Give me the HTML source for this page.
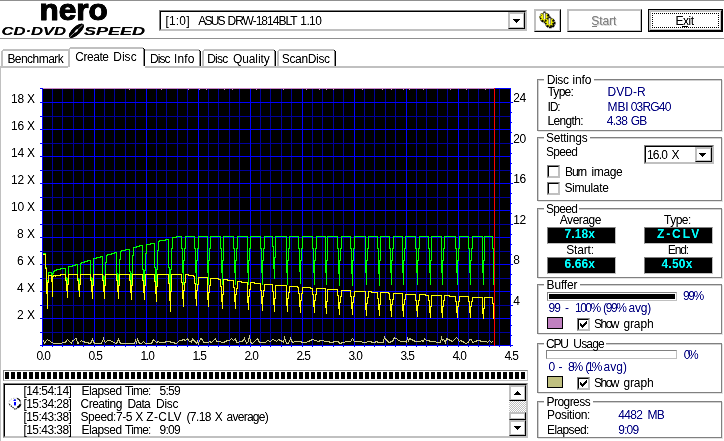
<!DOCTYPE html><html><head><meta charset="utf-8"><title>Nero CD-DVD Speed</title><style>
html,body{margin:0;padding:0;background:#fff;}
body{width:724px;height:441px;overflow:hidden;position:relative;font-family:"Liberation Sans",sans-serif;font-size:12px;color:#000;}
.a{position:absolute;}
.t{filter:url(#al);position:absolute;white-space:pre;line-height:14px;height:14px;}
.grp{position:absolute;border:1px solid #808080;box-sizing:border-box;box-shadow:inset 1px 1px 0 #d0d0d0,1px 1px 0 #e4e4e4;}
.btn{position:absolute;box-sizing:border-box;background:#fff;border-style:solid;border-width:1px;border-color:#c0c0c0 #000 #000 #c0c0c0;}
.btn:after{content:"";position:absolute;left:0;top:0;right:0;bottom:0;border-style:solid;border-width:1px;border-color:#c0c0c0;}
.sunk{position:absolute;box-sizing:border-box;background:#fff;border-style:solid;border-width:1px;border-color:#808080 #c0c0c0 #c0c0c0 #808080;}
.sunk:after{content:"";position:absolute;left:0;top:0;right:0;bottom:0;border-style:solid;border-width:1px;border-color:#000 #c0c0c0 #c0c0c0 #000;pointer-events:none;}
.lcd{position:absolute;box-sizing:border-box;background:#000;border:1px solid #808080;border-right-color:#c0c0c0;border-bottom-color:#c0c0c0;}
.chk{position:absolute;box-sizing:border-box;width:13px;height:13px;background:#fff;border-style:solid;border-width:1px;border-color:#808080 #c0c0c0 #c0c0c0 #808080;}
.chk:after{content:"";position:absolute;left:0;top:0;right:0;bottom:0;border-style:solid;border-width:1px;border-color:#000 #c0c0c0 #c0c0c0 #000;}
</style></head><body>
<svg width="0" height="0" style="position:absolute"><filter id="al" x="-10%" y="-10%" width="120%" height="120%" color-interpolation-filters="sRGB"><feComponentTransfer><feFuncA type="table" tableValues="0 0.12 0.55 0.9 1"/></feComponentTransfer></filter></svg>
<div class="a" style="left:0;top:0;width:724px;height:1px;background:#909090"></div>
<div class="a" style="left:0;top:38px;width:724px;height:1px;background:#909090"></div>
<svg class="a" style="left:0;top:0;filter:url(#al)" width="150" height="38" viewBox="0 0 150 38">
<text x="39.6" y="19.6" font-family="Liberation Sans, sans-serif" font-weight="bold" font-size="29" textLength="68.2" lengthAdjust="spacingAndGlyphs" stroke="#000" stroke-width="1.1" fill="#000">nero</text>
<g font-family="Liberation Sans, sans-serif" font-weight="bold" font-style="italic" font-size="11.5" fill="#000" stroke="#000" stroke-width="0.15">
<text x="1.5" y="35" textLength="64.5" lengthAdjust="spacingAndGlyphs">CD·DVD</text>
<text x="84" y="35" textLength="61" lengthAdjust="spacingAndGlyphs">SPEED</text>
</g>
<g transform="translate(76.4,30.8) rotate(-43)"><ellipse cx="0" cy="0" rx="9.6" ry="4.1" fill="#000"/><path d="M-8.4 0H8.4" stroke="#fff" stroke-width="0.6" fill="none"/><ellipse cx="0" cy="0" rx="2.2" ry="0.9" fill="#fff"/></g>
</svg>
<div class="sunk" style="left:159px;top:10px;width:368px;height:21px"></div>
<div class="btn" style="left:508px;top:12px;width:17px;height:17px"></div>
<svg class="a" style="left:513px;top:19px" width="8" height="5" shape-rendering="crispEdges"><path d="M0 0h7v1h-1v1h-1v1h-1v1h-1v-1h-1v-1h-1v-1h-1z" fill="#000"/></svg>
<div class="btn" style="left:534px;top:9px;width:27px;height:23px"></div>
<svg class="a" style="left:0;top:0" width="724" height="40" viewBox="0 0 724 40"><path d="M548.83 16.19L548.83 17.81L547.41 17.77L547.01 18.72L548.05 19.70L546.90 20.85L545.92 19.81L544.97 20.21L545.01 21.63L543.39 21.63L543.43 20.21L542.48 19.81L541.50 20.85L540.35 19.70L541.39 18.72L540.99 17.77L539.57 17.81L539.57 16.19L540.99 16.23L541.39 15.28L540.35 14.30L541.50 13.15L542.48 14.19L543.43 13.79L543.39 12.37L545.01 12.37L544.97 13.79L545.92 14.19L546.90 13.15L548.05 14.30L547.01 15.28L547.41 16.23z" transform="translate(0.9,0.9)" fill="#000" stroke="#000" stroke-width="1.2"/><path d="M548.83 16.19L548.83 17.81L547.41 17.77L547.01 18.72L548.05 19.70L546.90 20.85L545.92 19.81L544.97 20.21L545.01 21.63L543.39 21.63L543.43 20.21L542.48 19.81L541.50 20.85L540.35 19.70L541.39 18.72L540.99 17.77L539.57 17.81L539.57 16.19L540.99 16.23L541.39 15.28L540.35 14.30L541.50 13.15L542.48 14.19L543.43 13.79L543.39 12.37L545.01 12.37L544.97 13.79L545.92 14.19L546.90 13.15L548.05 14.30L547.01 15.28L547.41 16.23z" fill="#f4f400" stroke="#202000" stroke-width="0.5"/><path d="M554.03 21.39L554.03 23.01L552.61 22.97L552.21 23.92L553.25 24.90L552.10 26.05L551.12 25.01L550.17 25.41L550.21 26.83L548.59 26.83L548.63 25.41L547.68 25.01L546.70 26.05L545.55 24.90L546.59 23.92L546.19 22.97L544.77 23.01L544.77 21.39L546.19 21.43L546.59 20.48L545.55 19.50L546.70 18.35L547.68 19.39L548.63 18.99L548.59 17.57L550.21 17.57L550.17 18.99L551.12 19.39L552.10 18.35L553.25 19.50L552.21 20.48L552.61 21.43z" transform="translate(0.9,0.9)" fill="#000" stroke="#000" stroke-width="1.2"/><path d="M554.03 21.39L554.03 23.01L552.61 22.97L552.21 23.92L553.25 24.90L552.10 26.05L551.12 25.01L550.17 25.41L550.21 26.83L548.59 26.83L548.63 25.41L547.68 25.01L546.70 26.05L545.55 24.90L546.59 23.92L546.19 22.97L544.77 23.01L544.77 21.39L546.19 21.43L546.59 20.48L545.55 19.50L546.70 18.35L547.68 19.39L548.63 18.99L548.59 17.57L550.21 17.57L550.17 18.99L551.12 19.39L552.10 18.35L553.25 19.50L552.21 20.48L552.61 21.43z" fill="#f4f400" stroke="#202000" stroke-width="0.5"/><rect x="543.3" y="12.5" width="2.4" height="6.5" fill="#707070"/><rect x="544.0" y="13.0" width="1" height="6" fill="#f0f0f0"/><rect x="543.5" y="11.5" width="2" height="1" fill="#000"/><rect x="548.4" y="17.7" width="2.4" height="6.5" fill="#707070"/><rect x="549.1" y="18.2" width="1" height="6" fill="#f0f0f0"/><rect x="548.6" y="16.7" width="2" height="1" fill="#000"/></svg>
<div class="btn" style="left:567px;top:9px;width:75px;height:23px"></div>
<div class="a" style="left:592px;top:26px;width:5px;height:1px;background:#808080"></div>
<div class="a" style="left:648px;top:9px;width:75px;height:23px;box-sizing:border-box;border:1px solid #000"></div>
<div class="btn" style="left:649px;top:10px;width:73px;height:21px"></div>
<div class="a" style="left:652px;top:13px;width:67px;height:15px;box-sizing:border-box;border:1px dotted #000"></div>
<div class="a" style="left:682px;top:26px;width:6px;height:1px;background:#000"></div>
<svg class="a" style="left:0;top:0" width="724" height="441" shape-rendering="crispEdges"><path d="M0 66h68v2h-68zM145 66h579v2h-579zM0 66h1v375h-1zM3 49h66v2h-66zM1 51h2v15h-2zM2 50h1v1h-1zM145 49h54v2h-54zM204 49h70v2h-70zM202 51h2v15h-2zM203 50h1v1h-1zM279 49h55v2h-55zM277 51h2v15h-2zM278 50h1v1h-1zM70 47h73v2h-73zM68 49h2v17h-2zM69 48h1v1h-1zM68 66h2v1h-2z" fill="#c0c0c0"/><path d="M199 51h1v15h-1zM274 51h1v15h-1zM334 51h1v15h-1zM143 49h1v17h-1z" fill="#909090"/><path d="M200 51h1v15h-1zM199 50h1v1h-1zM275 51h1v15h-1zM274 50h1v1h-1zM335 51h1v15h-1zM334 50h1v1h-1zM144 49h1v17h-1zM143 48h1v1h-1z" fill="#000"/></svg>
<div class="grp" style="left:537px;top:79px;width:185px;height:52px"></div>
<div class="a" style="left:544px;top:77px;width:50px;height:5px;background:#fff"></div>
<div class="grp" style="left:537px;top:137px;width:185px;height:64px"></div>
<div class="a" style="left:544px;top:135px;width:46px;height:5px;background:#fff"></div>
<div class="sunk" style="left:644px;top:145px;width:70px;height:19px"></div>
<div class="btn" style="left:695px;top:147px;width:17px;height:15px"></div>
<svg class="a" style="left:699px;top:153px" width="8" height="5" shape-rendering="crispEdges"><path d="M0 0h7v1h-1v1h-1v1h-1v1h-1v-1h-1v-1h-1v-1h-1z" fill="#000"/></svg>
<div class="chk" style="left:547px;top:165px"></div>
<div class="chk" style="left:547px;top:182px"></div>
<div class="grp" style="left:537px;top:208px;width:185px;height:70px"></div>
<div class="a" style="left:544px;top:206px;width:35px;height:5px;background:#fff"></div>
<div class="lcd" style="left:547px;top:227px;width:69px;height:17px"></div>
<div class="lcd" style="left:644px;top:227px;width:69px;height:17px"></div>
<div class="lcd" style="left:547px;top:257px;width:69px;height:17px"></div>
<div class="lcd" style="left:644px;top:257px;width:69px;height:17px"></div>
<div class="grp" style="left:537px;top:284px;width:185px;height:50px"></div>
<div class="a" style="left:544px;top:282px;width:36px;height:5px;background:#fff"></div>
<div class="a" style="left:547px;top:292px;width:130px;height:9px;box-sizing:border-box;border:1px solid #808080;border-right-color:#c0c0c0;border-bottom-color:#c0c0c0;background:#fff"><div style="position:absolute;left:1px;top:1px;width:126px;height:5px;background:#000"></div></div>
<div class="a" style="left:547px;top:317px;width:16px;height:12px;box-sizing:border-box;border:1px solid #000;background:#c080c0"></div>
<div class="chk" style="left:577px;top:318px"></div>
<svg class="a" style="left:580px;top:321px" width="7" height="7" shape-rendering="crispEdges"><path d="M0 2h1v1h1v1h1v-1h1v-1h1v-1h1v-1h1v3h-1v1h-1v1h-1v1h-1v1h-1v-1h-1v-1h-1z" fill="#000"/></svg>
<div class="grp" style="left:537px;top:343px;width:185px;height:50px"></div>
<div class="a" style="left:544px;top:341px;width:62px;height:5px;background:#fff"></div>
<div class="a" style="left:546px;top:350px;width:131px;height:9px;box-sizing:border-box;border:1px solid #808080;border-right-color:#c0c0c0;border-bottom-color:#c0c0c0;background:#fff"></div>
<div class="a" style="left:547px;top:376px;width:16px;height:12px;box-sizing:border-box;border:1px solid #000;background:#c0c080"></div>
<div class="chk" style="left:577px;top:377px"></div>
<svg class="a" style="left:580px;top:380px" width="7" height="7" shape-rendering="crispEdges"><path d="M0 2h1v1h1v1h1v-1h1v-1h1v-1h1v-1h1v3h-1v1h-1v1h-1v1h-1v1h-1v-1h-1v-1h-1z" fill="#000"/></svg>
<div class="grp" style="left:537px;top:401px;width:185px;height:37px"></div>
<div class="a" style="left:544px;top:399px;width:49px;height:5px;background:#fff"></div>
<div class="a" style="left:3px;top:370px;width:525px;height:11px;box-sizing:border-box;border:1px solid #808080;border-right-color:#c0c0c0;border-bottom-color:#c0c0c0"></div>
<svg class="a" style="left:0;top:0" width="724" height="441" shape-rendering="crispEdges"><path d="M5 372h4v7h-4zM11 372h4v7h-4zM17 372h4v7h-4zM23 372h4v7h-4zM29 372h4v7h-4zM35 372h4v7h-4zM41 372h4v7h-4zM47 372h4v7h-4zM53 372h4v7h-4zM59 372h4v7h-4zM65 372h4v7h-4zM71 372h4v7h-4zM77 372h4v7h-4zM83 372h4v7h-4zM89 372h4v7h-4zM95 372h4v7h-4zM101 372h4v7h-4zM107 372h4v7h-4zM113 372h4v7h-4zM119 372h4v7h-4zM125 372h4v7h-4zM131 372h4v7h-4zM137 372h4v7h-4zM143 372h4v7h-4zM149 372h4v7h-4zM155 372h4v7h-4zM161 372h4v7h-4zM167 372h4v7h-4zM173 372h4v7h-4zM179 372h4v7h-4zM185 372h4v7h-4zM191 372h4v7h-4zM197 372h4v7h-4zM203 372h4v7h-4zM209 372h4v7h-4zM215 372h4v7h-4zM221 372h4v7h-4zM227 372h4v7h-4zM233 372h4v7h-4zM239 372h4v7h-4zM245 372h4v7h-4zM251 372h4v7h-4zM257 372h4v7h-4zM263 372h4v7h-4zM269 372h4v7h-4zM275 372h4v7h-4zM281 372h4v7h-4zM287 372h4v7h-4zM293 372h4v7h-4zM299 372h4v7h-4zM305 372h4v7h-4zM311 372h4v7h-4zM317 372h4v7h-4zM323 372h4v7h-4zM329 372h4v7h-4zM335 372h4v7h-4zM341 372h4v7h-4zM347 372h4v7h-4zM353 372h4v7h-4zM359 372h4v7h-4zM365 372h4v7h-4zM371 372h4v7h-4zM377 372h4v7h-4zM383 372h4v7h-4zM389 372h4v7h-4zM395 372h4v7h-4zM401 372h4v7h-4zM407 372h4v7h-4zM413 372h4v7h-4zM419 372h4v7h-4zM425 372h4v7h-4zM431 372h4v7h-4zM437 372h4v7h-4zM443 372h4v7h-4zM449 372h4v7h-4zM455 372h4v7h-4zM461 372h4v7h-4zM467 372h4v7h-4zM473 372h4v7h-4zM479 372h4v7h-4zM485 372h4v7h-4zM491 372h4v7h-4zM497 372h4v7h-4zM503 372h4v7h-4zM509 372h4v7h-4zM515 372h4v7h-4zM521 372h4v7h-4z" fill="#000"/></svg>
<div class="sunk" style="left:3px;top:383px;width:525px;height:55px"></div>
<div class="a" style="left:509px;top:385px;width:17px;height:51px;background:repeating-conic-gradient(#c0c0c0 0% 25%, #fff 0% 50%) 0 0/2px 2px"></div>
<div class="btn" style="left:509px;top:385px;width:17px;height:16px"></div>
<div class="btn" style="left:509px;top:412px;width:17px;height:8px"></div>
<div class="btn" style="left:509px;top:420px;width:17px;height:16px"></div>
<svg class="a" style="left:514px;top:391px" width="8" height="5" shape-rendering="crispEdges"><path d="M3 0h1v1h1v1h1v1h1v1h-7v-1h1v-1h1v-1h1z" fill="#000"/></svg>
<svg class="a" style="left:514px;top:426px" width="8" height="5" shape-rendering="crispEdges"><path d="M0 0h7v1h-1v1h-1v1h-1v1h-1v-1h-1v-1h-1v-1h-1z" fill="#000"/></svg>
<svg class="a" style="left:0;top:390px" width="30" height="25" viewBox="0 390 30 25">
<path d="M17.2 398.4C18.8 399 20 400.2 20.4 401.5" fill="none" stroke="#000" stroke-width="1.2"/><path d="M20.6 401.5V404.5" fill="none" stroke="#909090" stroke-width="1"/><path d="M20.5 404.3C20 406 18.8 407 17.3 407.7" fill="none" stroke="#000" stroke-width="2"/>
<path d="M9.2 404.3L15.5 409.7L17.2 407.4" fill="none" stroke="#000" stroke-width="1.1" stroke-dasharray="1.3 0.9"/>
<path d="M9.2 404C8.2 400.5 11.5 397.8 16.5 398.2" fill="none" stroke="#a0a0a0" stroke-width="1" stroke-dasharray="1 1.6"/>
<path d="M13.2 401L14.6 399h0.8L16 401z" fill="#0000ff"/><rect x="14" y="402" width="2" height="3.4" fill="#0000ff"/>
</svg>
<svg class="chart" width="724" height="441" viewBox="0 0 724 441" shape-rendering="crispEdges" style="position:absolute;left:0;top:0">
<rect x="43" y="89" width="467" height="256" fill="#000"/>
<path d="M43 332h467v1h-467zM43 305h467v1h-467zM43 278h467v1h-467zM43 251h467v1h-467zM43 224h467v1h-467zM43 197h467v1h-467zM43 170h467v1h-467zM43 143h467v1h-467zM43 116h467v1h-467zM52 89h1v256h-1zM62 89h1v256h-1zM73 89h1v256h-1zM83 89h1v256h-1zM104 89h1v256h-1zM114 89h1v256h-1zM125 89h1v256h-1zM135 89h1v256h-1zM156 89h1v256h-1zM166 89h1v256h-1zM177 89h1v256h-1zM187 89h1v256h-1zM208 89h1v256h-1zM218 89h1v256h-1zM229 89h1v256h-1zM239 89h1v256h-1zM260 89h1v256h-1zM270 89h1v256h-1zM281 89h1v256h-1zM291 89h1v256h-1zM312 89h1v256h-1zM322 89h1v256h-1zM333 89h1v256h-1zM343 89h1v256h-1zM364 89h1v256h-1zM374 89h1v256h-1zM385 89h1v256h-1zM395 89h1v256h-1zM416 89h1v256h-1zM426 89h1v256h-1zM437 89h1v256h-1zM447 89h1v256h-1zM468 89h1v256h-1zM478 89h1v256h-1zM489 89h1v256h-1zM499 89h1v256h-1z" fill="#00009c"/>
<path d="M43 318h467v1h-467zM43 291h467v1h-467zM43 264h467v1h-467zM43 237h467v1h-467zM43 210h467v1h-467zM43 183h467v1h-467zM43 156h467v1h-467zM43 129h467v1h-467zM43 102h467v1h-467zM94 89h1v256h-1zM146 89h1v256h-1zM198 89h1v256h-1zM250 89h1v256h-1zM302 89h1v256h-1zM354 89h1v256h-1zM406 89h1v256h-1zM458 89h1v256h-1z" fill="#0000ff"/>
<path d="M42 88h469v1h-469zM42 345h469v1h-469zM42 88h1v258h-1zM510 88h1v258h-1zM40 345h2v1h-2zM40 332h2v1h-2zM40 318h2v1h-2zM40 305h2v1h-2zM40 291h2v1h-2zM40 278h2v1h-2zM40 264h2v1h-2zM40 251h2v1h-2zM40 237h2v1h-2zM40 224h2v1h-2zM40 210h2v1h-2zM40 197h2v1h-2zM40 183h2v1h-2zM40 170h2v1h-2zM40 156h2v1h-2zM40 143h2v1h-2zM40 129h2v1h-2zM40 116h2v1h-2zM40 102h2v1h-2zM40 88h2v1h-2zM511 345h2v1h-2zM511 335h1v1h-1zM511 325h1v1h-1zM511 315h1v1h-1zM511 305h2v1h-2zM511 294h1v1h-1zM511 284h1v1h-1zM511 274h1v1h-1zM511 264h2v1h-2zM511 254h1v1h-1zM511 244h1v1h-1zM511 234h1v1h-1zM511 224h2v1h-2zM511 213h1v1h-1zM511 203h1v1h-1zM511 193h1v1h-1zM511 183h2v1h-2zM511 173h1v1h-1zM511 163h1v1h-1zM511 153h1v1h-1zM511 143h2v1h-2zM511 132h1v1h-1zM511 122h1v1h-1zM511 112h1v1h-1zM511 102h2v1h-2zM42 346h1v1h-1zM52 346h1v1h-1zM62 346h1v1h-1zM73 346h1v1h-1zM83 346h1v1h-1zM94 346h1v1h-1zM104 346h1v1h-1zM114 346h1v1h-1zM125 346h1v1h-1zM135 346h1v1h-1zM146 346h1v1h-1zM156 346h1v1h-1zM166 346h1v1h-1zM177 346h1v1h-1zM187 346h1v1h-1zM198 346h1v1h-1zM208 346h1v1h-1zM218 346h1v1h-1zM229 346h1v1h-1zM239 346h1v1h-1zM250 346h1v1h-1zM260 346h1v1h-1zM270 346h1v1h-1zM281 346h1v1h-1zM291 346h1v1h-1zM302 346h1v1h-1zM312 346h1v1h-1zM322 346h1v1h-1zM333 346h1v1h-1zM343 346h1v1h-1zM354 346h1v1h-1zM364 346h1v1h-1zM374 346h1v1h-1zM385 346h1v1h-1zM395 346h1v1h-1zM406 346h1v1h-1zM416 346h1v1h-1zM426 346h1v1h-1zM437 346h1v1h-1zM447 346h1v1h-1zM458 346h1v1h-1zM468 346h1v1h-1zM478 346h1v1h-1zM489 346h1v1h-1zM499 346h1v1h-1zM510 346h1v1h-1z" fill="#0000ff"/>
<rect x="43" y="88" width="452" height="1" fill="#c888c8"/>
<path d="M129 89h1v1h-1zM161 89h1v1h-1zM188 89h1v1h-1zM199 89h1v1h-1zM206 89h1v1h-1zM224 89h1v1h-1zM232 89h1v1h-1zM256 89h1v1h-1zM283 89h1v1h-1zM306 89h1v1h-1zM319 89h1v1h-1zM326 89h1v1h-1zM333 89h1v1h-1zM362 89h1v1h-1zM382 89h1v1h-1zM391 89h1v1h-1zM403 89h1v1h-1zM409 89h1v1h-1zM423 89h1v1h-1zM450 89h1v1h-1zM466 89h1v1h-1zM485 89h1v1h-1z" fill="#c888c8"/>
<path d="M43 253h1v1h-1zM44 253h1v1h-1zM45 253h1v15h-1zM46 267h1v26h-1zM47 280h1v21h-1zM48 272h1v9h-1zM49 272h1v1h-1zM50 272h1v1h-1zM51 272h1v8h-1zM52 273h1v15h-1zM53 271h1v3h-1zM54 270h1v2h-1zM55 270h1v1h-1zM56 269h1v2h-1zM57 269h1v1h-1zM58 269h1v1h-1zM59 269h1v1h-1zM60 268h1v2h-1zM61 268h1v1h-1zM62 268h1v1h-1zM63 268h1v1h-1zM64 268h1v1h-1zM65 268h1v10h-1zM66 277h1v9h-1zM67 278h1v8h-1zM68 266h1v13h-1zM69 266h1v1h-1zM70 266h1v1h-1zM71 266h1v1h-1zM72 265h1v2h-1zM73 265h1v1h-1zM74 265h1v1h-1zM75 264h1v2h-1zM76 264h1v1h-1zM77 264h1v15h-1zM78 278h1v13h-1zM79 279h1v12h-1zM80 263h1v17h-1zM81 262h1v2h-1zM82 262h1v1h-1zM83 262h1v1h-1zM84 261h1v2h-1zM85 261h1v1h-1zM86 261h1v1h-1zM87 260h1v2h-1zM88 260h1v1h-1zM89 260h1v1h-1zM90 260h1v18h-1zM91 277h1v15h-1zM92 278h1v14h-1zM93 258h1v21h-1zM94 258h1v1h-1zM95 258h1v1h-1zM96 257h1v2h-1zM97 257h1v1h-1zM98 257h1v1h-1zM99 257h1v1h-1zM100 256h1v2h-1zM101 256h1v1h-1zM102 256h1v20h-1zM103 275h1v16h-1zM104 276h1v15h-1zM105 262h1v15h-1zM106 255h1v8h-1zM107 254h1v2h-1zM108 254h1v1h-1zM109 254h1v1h-1zM110 254h1v1h-1zM111 253h1v2h-1zM112 253h1v1h-1zM113 253h1v1h-1zM114 252h1v2h-1zM115 252h1v1h-1zM116 252h1v22h-1zM117 273h1v18h-1zM118 274h1v17h-1zM119 259h1v16h-1zM120 251h1v9h-1zM121 250h1v2h-1zM122 250h1v1h-1zM123 250h1v1h-1zM124 250h1v1h-1zM125 249h1v2h-1zM126 249h1v1h-1zM127 249h1v1h-1zM128 249h1v1h-1zM129 249h1v23h-1zM130 271h1v19h-1zM131 273h1v17h-1zM132 255h1v19h-1zM133 247h1v9h-1zM134 247h1v1h-1zM135 247h1v1h-1zM136 246h1v2h-1zM137 246h1v1h-1zM138 246h1v1h-1zM139 245h1v2h-1zM140 245h1v1h-1zM141 245h1v1h-1zM142 245h1v25h-1zM143 269h1v20h-1zM144 270h1v19h-1zM145 253h1v18h-1zM146 244h1v10h-1zM147 244h1v1h-1zM148 244h1v1h-1zM149 244h1v1h-1zM150 243h1v2h-1zM151 243h1v1h-1zM152 243h1v1h-1zM153 243h1v1h-1zM154 243h1v25h-1zM155 267h1v21h-1zM156 269h1v19h-1zM157 250h1v20h-1zM158 241h1v10h-1zM159 240h1v2h-1zM160 240h1v1h-1zM161 240h1v1h-1zM162 240h1v1h-1zM163 240h1v1h-1zM164 240h1v1h-1zM165 239h1v2h-1zM166 239h1v1h-1zM167 239h1v1h-1zM168 239h1v29h-1zM169 267h1v24h-1zM170 269h1v22h-1zM171 248h1v22h-1zM172 237h1v12h-1zM173 237h1v1h-1zM174 237h1v1h-1zM175 237h1v1h-1zM176 236h1v2h-1zM177 236h1v1h-1zM178 236h1v1h-1zM179 236h1v1h-1zM180 236h1v1h-1zM181 236h1v13h-1zM182 248h1v25h-1zM183 260h1v25h-1zM184 248h1v13h-1zM185 236h1v13h-1zM186 236h1v1h-1zM187 236h1v1h-1zM188 236h1v1h-1zM189 236h1v1h-1zM190 236h1v1h-1zM191 236h1v1h-1zM192 236h1v1h-1zM193 236h1v1h-1zM194 236h1v13h-1zM195 248h1v25h-1zM196 260h1v25h-1zM197 248h1v13h-1zM198 236h1v13h-1zM199 236h1v1h-1zM200 236h1v1h-1zM201 236h1v1h-1zM202 236h1v1h-1zM203 236h1v1h-1zM204 236h1v1h-1zM205 236h1v1h-1zM206 236h1v1h-1zM207 236h1v37h-1zM208 260h1v25h-1zM209 248h1v13h-1zM210 236h1v13h-1zM211 236h1v1h-1zM212 236h1v1h-1zM213 236h1v1h-1zM214 236h1v1h-1zM215 236h1v1h-1zM216 236h1v1h-1zM217 236h1v1h-1zM218 236h1v1h-1zM219 236h1v1h-1zM220 236h1v13h-1zM221 248h1v25h-1zM222 260h1v25h-1zM223 236h1v25h-1zM224 236h1v1h-1zM225 236h1v1h-1zM226 236h1v1h-1zM227 236h1v1h-1zM228 236h1v1h-1zM229 236h1v1h-1zM230 236h1v1h-1zM231 236h1v1h-1zM232 236h1v1h-1zM233 236h1v13h-1zM234 248h1v25h-1zM235 260h1v25h-1zM236 248h1v13h-1zM237 236h1v13h-1zM238 236h1v1h-1zM239 236h1v1h-1zM240 236h1v1h-1zM241 236h1v1h-1zM242 236h1v1h-1zM243 236h1v1h-1zM244 236h1v1h-1zM245 236h1v1h-1zM246 236h1v1h-1zM247 236h1v37h-1zM248 260h1v25h-1zM249 248h1v13h-1zM250 236h1v13h-1zM251 236h1v1h-1zM252 236h1v1h-1zM253 236h1v1h-1zM254 236h1v1h-1zM255 236h1v1h-1zM256 236h1v1h-1zM257 236h1v1h-1zM258 236h1v1h-1zM259 236h1v1h-1zM260 236h1v13h-1zM261 248h1v25h-1zM262 260h1v25h-1zM263 248h1v13h-1zM264 236h1v13h-1zM265 236h1v1h-1zM266 236h1v1h-1zM267 236h1v1h-1zM268 236h1v1h-1zM269 236h1v1h-1zM270 236h1v1h-1zM271 236h1v1h-1zM272 236h1v11h-1zM273 246h1v23h-1zM274 257h1v22h-1zM275 236h1v22h-1zM276 236h1v1h-1zM277 236h1v1h-1zM278 236h1v1h-1zM279 236h1v1h-1zM280 236h1v1h-1zM281 236h1v1h-1zM282 236h1v1h-1zM283 236h1v1h-1zM284 236h1v1h-1zM285 236h1v1h-1zM286 236h1v37h-1zM287 260h1v25h-1zM288 248h1v13h-1zM289 236h1v13h-1zM290 236h1v1h-1zM291 236h1v1h-1zM292 236h1v1h-1zM293 236h1v1h-1zM294 236h1v1h-1zM295 236h1v1h-1zM296 236h1v1h-1zM297 236h1v1h-1zM298 236h1v13h-1zM299 248h1v24h-1zM300 260h1v24h-1zM301 248h1v13h-1zM302 236h1v13h-1zM303 236h1v1h-1zM304 236h1v1h-1zM305 236h1v1h-1zM306 236h1v1h-1zM307 236h1v1h-1zM308 236h1v1h-1zM309 236h1v1h-1zM310 236h1v1h-1zM311 236h1v1h-1zM312 236h1v13h-1zM313 248h1v25h-1zM314 260h1v25h-1zM315 248h1v13h-1zM316 236h1v13h-1zM317 236h1v1h-1zM318 236h1v1h-1zM319 236h1v1h-1zM320 236h1v1h-1zM321 236h1v1h-1zM322 236h1v1h-1zM323 236h1v1h-1zM324 236h1v1h-1zM325 236h1v37h-1zM326 260h1v25h-1zM327 236h1v25h-1zM328 236h1v1h-1zM329 236h1v1h-1zM330 236h1v1h-1zM331 236h1v1h-1zM332 236h1v1h-1zM333 236h1v1h-1zM334 236h1v1h-1zM335 236h1v1h-1zM336 236h1v1h-1zM337 236h1v13h-1zM338 248h1v26h-1zM339 260h1v26h-1zM340 248h1v13h-1zM341 236h1v13h-1zM342 236h1v1h-1zM343 236h1v1h-1zM344 236h1v1h-1zM345 236h1v1h-1zM346 236h1v1h-1zM347 236h1v1h-1zM348 236h1v1h-1zM349 236h1v1h-1zM350 236h1v13h-1zM351 248h1v26h-1zM352 260h1v26h-1zM353 248h1v13h-1zM354 236h1v13h-1zM355 236h1v1h-1zM356 236h1v1h-1zM357 236h1v1h-1zM358 236h1v1h-1zM359 236h1v1h-1zM360 236h1v1h-1zM361 236h1v1h-1zM362 236h1v1h-1zM363 236h1v1h-1zM364 236h1v1h-1zM365 236h1v37h-1zM366 260h1v25h-1zM367 248h1v13h-1zM368 236h1v13h-1zM369 236h1v1h-1zM370 236h1v1h-1zM371 236h1v1h-1zM372 236h1v1h-1zM373 236h1v1h-1zM374 236h1v1h-1zM375 236h1v1h-1zM376 236h1v1h-1zM377 236h1v13h-1zM378 248h1v26h-1zM379 260h1v26h-1zM380 236h1v25h-1zM381 236h1v1h-1zM382 236h1v1h-1zM383 236h1v1h-1zM384 236h1v1h-1zM385 236h1v1h-1zM386 236h1v1h-1zM387 236h1v1h-1zM388 236h1v1h-1zM389 236h1v13h-1zM390 248h1v25h-1zM391 260h1v25h-1zM392 248h1v13h-1zM393 236h1v13h-1zM394 236h1v1h-1zM395 236h1v1h-1zM396 236h1v1h-1zM397 236h1v1h-1zM398 236h1v1h-1zM399 236h1v1h-1zM400 236h1v1h-1zM401 236h1v1h-1zM402 236h1v37h-1zM403 260h1v25h-1zM404 248h1v13h-1zM405 236h1v13h-1zM406 236h1v1h-1zM407 236h1v1h-1zM408 236h1v1h-1zM409 236h1v1h-1zM410 236h1v1h-1zM411 236h1v1h-1zM412 236h1v1h-1zM413 236h1v1h-1zM414 236h1v1h-1zM415 236h1v13h-1zM416 248h1v25h-1zM417 260h1v25h-1zM418 248h1v13h-1zM419 236h1v13h-1zM420 236h1v1h-1zM421 236h1v1h-1zM422 236h1v1h-1zM423 236h1v1h-1zM424 236h1v1h-1zM425 236h1v1h-1zM426 236h1v1h-1zM427 236h1v1h-1zM428 236h1v13h-1zM429 248h1v25h-1zM430 260h1v25h-1zM431 236h1v25h-1zM432 236h1v1h-1zM433 236h1v1h-1zM434 236h1v1h-1zM435 236h1v1h-1zM436 236h1v1h-1zM437 236h1v1h-1zM438 236h1v1h-1zM439 236h1v1h-1zM440 236h1v1h-1zM441 236h1v37h-1zM442 260h1v25h-1zM443 248h1v13h-1zM444 236h1v13h-1zM445 236h1v1h-1zM446 236h1v1h-1zM447 236h1v1h-1zM448 236h1v1h-1zM449 236h1v1h-1zM450 236h1v1h-1zM451 236h1v1h-1zM452 236h1v1h-1zM453 236h1v1h-1zM454 236h1v1h-1zM455 236h1v13h-1zM456 248h1v25h-1zM457 260h1v25h-1zM458 248h1v13h-1zM459 236h1v13h-1zM460 236h1v1h-1zM461 236h1v1h-1zM462 236h1v1h-1zM463 236h1v1h-1zM464 236h1v1h-1zM465 236h1v1h-1zM466 236h1v1h-1zM467 236h1v1h-1zM468 236h1v13h-1zM469 248h1v25h-1zM470 260h1v25h-1zM471 248h1v13h-1zM472 236h1v13h-1zM473 236h1v1h-1zM474 236h1v1h-1zM475 236h1v1h-1zM476 236h1v1h-1zM477 236h1v1h-1zM478 236h1v1h-1zM479 236h1v1h-1zM480 236h1v1h-1zM481 236h1v1h-1zM482 236h1v37h-1zM483 260h1v25h-1zM484 236h1v25h-1zM485 236h1v1h-1zM486 236h1v1h-1zM487 236h1v1h-1zM488 236h1v1h-1zM489 236h1v1h-1zM490 236h1v1h-1zM491 236h1v1h-1zM492 236h1v13h-1zM493 248h1v37h-1z" fill="#00ff00"/>
<path d="M43 254h1v1h-1zM44 254h1v1h-1zM45 254h1v15h-1zM46 268h1v26h-1zM47 282h1v27h-1zM48 275h1v8h-1zM49 275h1v1h-1zM50 275h1v1h-1zM51 275h1v7h-1zM52 276h1v21h-1zM53 275h1v2h-1zM54 275h1v1h-1zM55 275h1v2h-1zM56 275h1v1h-1zM57 275h1v1h-1zM58 275h1v1h-1zM59 275h1v1h-1zM60 274h1v2h-1zM61 274h1v1h-1zM62 274h1v1h-1zM63 274h1v1h-1zM64 274h1v1h-1zM65 274h1v7h-1zM66 280h1v11h-1zM67 284h1v14h-1zM68 274h1v11h-1zM69 274h1v1h-1zM70 274h1v1h-1zM71 274h1v1h-1zM72 274h1v1h-1zM73 274h1v1h-1zM74 274h1v1h-1zM75 274h1v1h-1zM76 274h1v1h-1zM77 274h1v7h-1zM78 280h1v10h-1zM79 284h1v13h-1zM80 274h1v11h-1zM81 274h1v1h-1zM82 274h1v1h-1zM83 274h1v1h-1zM84 274h1v1h-1zM85 274h1v1h-1zM86 274h1v1h-1zM87 274h1v1h-1zM88 274h1v1h-1zM89 274h1v1h-1zM90 274h1v7h-1zM91 280h1v12h-1zM92 285h1v14h-1zM93 274h1v12h-1zM94 274h1v1h-1zM95 274h1v1h-1zM96 274h1v1h-1zM97 274h1v1h-1zM98 274h1v1h-1zM99 274h1v1h-1zM100 274h1v1h-1zM101 274h1v1h-1zM102 274h1v7h-1zM103 280h1v12h-1zM104 285h1v14h-1zM105 274h1v12h-1zM106 274h1v1h-1zM107 274h1v1h-1zM108 274h1v1h-1zM109 274h1v1h-1zM110 274h1v1h-1zM111 274h1v1h-1zM112 274h1v1h-1zM113 274h1v1h-1zM114 274h1v1h-1zM115 274h1v1h-1zM116 274h1v7h-1zM117 280h1v12h-1zM118 285h1v14h-1zM119 274h1v12h-1zM120 274h1v1h-1zM121 274h1v1h-1zM122 274h1v1h-1zM123 274h1v1h-1zM124 274h1v1h-1zM125 274h1v1h-1zM126 274h1v1h-1zM127 274h1v1h-1zM128 274h1v1h-1zM129 274h1v7h-1zM130 280h1v13h-1zM131 285h1v15h-1zM132 274h1v12h-1zM133 274h1v1h-1zM134 274h1v1h-1zM135 274h1v1h-1zM136 274h1v1h-1zM137 274h1v1h-1zM138 274h1v1h-1zM139 274h1v1h-1zM140 274h1v1h-1zM141 274h1v1h-1zM142 274h1v7h-1zM143 280h1v13h-1zM144 285h1v15h-1zM145 274h1v12h-1zM146 274h1v1h-1zM147 274h1v1h-1zM148 274h1v1h-1zM149 274h1v1h-1zM150 274h1v1h-1zM151 274h1v1h-1zM152 274h1v1h-1zM153 274h1v1h-1zM154 274h1v8h-1zM155 281h1v13h-1zM156 286h1v16h-1zM157 274h1v13h-1zM158 274h1v1h-1zM159 274h1v1h-1zM160 274h1v1h-1zM161 274h1v1h-1zM162 274h1v1h-1zM163 274h1v1h-1zM164 274h1v1h-1zM165 274h1v1h-1zM166 274h1v1h-1zM167 274h1v1h-1zM168 274h1v10h-1zM169 283h1v18h-1zM170 291h1v21h-1zM171 274h1v18h-1zM172 274h1v1h-1zM173 274h1v1h-1zM174 274h1v1h-1zM175 274h1v1h-1zM176 274h1v1h-1zM177 274h1v1h-1zM178 274h1v1h-1zM179 274h1v1h-1zM180 274h1v1h-1zM181 274h1v9h-1zM182 282h1v17h-1zM183 290h1v17h-1zM184 282h1v9h-1zM185 274h1v9h-1zM186 274h1v1h-1zM187 274h1v1h-1zM188 274h1v2h-1zM189 275h1v1h-1zM190 275h1v1h-1zM191 275h1v1h-1zM192 275h1v1h-1zM193 275h1v2h-1zM194 276h1v8h-1zM195 283h1v16h-1zM196 290h1v16h-1zM197 284h1v7h-1zM198 277h1v8h-1zM199 277h1v1h-1zM200 277h1v1h-1zM201 277h1v1h-1zM202 277h1v1h-1zM203 277h1v1h-1zM204 277h1v1h-1zM205 277h1v1h-1zM206 277h1v1h-1zM207 277h1v23h-1zM208 292h1v15h-1zM209 285h1v8h-1zM210 278h1v8h-1zM211 278h1v1h-1zM212 278h1v1h-1zM213 278h1v1h-1zM214 278h1v1h-1zM215 278h1v1h-1zM216 278h1v1h-1zM217 278h1v1h-1zM218 278h1v2h-1zM219 279h1v1h-1zM220 279h1v8h-1zM221 286h1v16h-1zM222 294h1v15h-1zM223 279h1v16h-1zM224 279h1v1h-1zM225 279h1v1h-1zM226 279h1v1h-1zM227 279h1v2h-1zM228 280h1v1h-1zM229 280h1v1h-1zM230 280h1v1h-1zM231 280h1v1h-1zM232 280h1v1h-1zM233 280h1v8h-1zM234 287h1v15h-1zM235 294h1v15h-1zM236 288h1v7h-1zM237 281h1v8h-1zM238 281h1v1h-1zM239 281h1v1h-1zM240 281h1v1h-1zM241 281h1v2h-1zM242 282h1v1h-1zM243 282h1v1h-1zM244 282h1v1h-1zM245 282h1v1h-1zM246 282h1v1h-1zM247 282h1v21h-1zM248 296h1v14h-1zM249 289h1v8h-1zM250 282h1v8h-1zM251 282h1v1h-1zM252 282h1v1h-1zM253 282h1v1h-1zM254 282h1v2h-1zM255 283h1v1h-1zM256 283h1v1h-1zM257 283h1v1h-1zM258 283h1v1h-1zM259 283h1v1h-1zM260 283h1v8h-1zM261 290h1v14h-1zM262 296h1v15h-1zM263 290h1v7h-1zM264 284h1v7h-1zM265 284h1v1h-1zM266 284h1v1h-1zM267 284h1v1h-1zM268 284h1v1h-1zM269 284h1v1h-1zM270 284h1v1h-1zM271 284h1v1h-1zM272 284h1v8h-1zM273 291h1v14h-1zM274 298h1v14h-1zM275 285h1v14h-1zM276 285h1v1h-1zM277 285h1v1h-1zM278 285h1v1h-1zM279 285h1v1h-1zM280 285h1v1h-1zM281 285h1v1h-1zM282 285h1v1h-1zM283 285h1v1h-1zM284 285h1v1h-1zM285 285h1v1h-1zM286 285h1v21h-1zM287 298h1v14h-1zM288 292h1v7h-1zM289 286h1v7h-1zM290 286h1v1h-1zM291 286h1v1h-1zM292 286h1v1h-1zM293 286h1v1h-1zM294 286h1v1h-1zM295 286h1v1h-1zM296 286h1v1h-1zM297 286h1v2h-1zM298 287h1v7h-1zM299 293h1v14h-1zM300 300h1v13h-1zM301 293h1v8h-1zM302 287h1v7h-1zM303 287h1v1h-1zM304 287h1v1h-1zM305 287h1v1h-1zM306 287h1v1h-1zM307 287h1v1h-1zM308 287h1v1h-1zM309 287h1v1h-1zM310 287h1v2h-1zM311 288h1v1h-1zM312 288h1v7h-1zM313 294h1v13h-1zM314 300h1v13h-1zM315 294h1v7h-1zM316 288h1v7h-1zM317 288h1v1h-1zM318 288h1v1h-1zM319 288h1v1h-1zM320 288h1v1h-1zM321 288h1v1h-1zM322 288h1v1h-1zM323 288h1v1h-1zM324 288h1v1h-1zM325 288h1v20h-1zM326 301h1v13h-1zM327 289h1v13h-1zM328 289h1v1h-1zM329 289h1v1h-1zM330 289h1v1h-1zM331 289h1v1h-1zM332 289h1v1h-1zM333 289h1v1h-1zM334 289h1v1h-1zM335 289h1v1h-1zM336 289h1v1h-1zM337 289h1v7h-1zM338 295h1v14h-1zM339 302h1v13h-1zM340 296h1v7h-1zM341 290h1v7h-1zM342 290h1v1h-1zM343 290h1v1h-1zM344 290h1v1h-1zM345 290h1v1h-1zM346 290h1v1h-1zM347 290h1v1h-1zM348 290h1v1h-1zM349 290h1v1h-1zM350 290h1v7h-1zM351 296h1v13h-1zM352 302h1v13h-1zM353 296h1v7h-1zM354 291h1v6h-1zM355 291h1v1h-1zM356 291h1v1h-1zM357 291h1v1h-1zM358 291h1v1h-1zM359 291h1v1h-1zM360 291h1v1h-1zM361 291h1v1h-1zM362 291h1v1h-1zM363 291h1v1h-1zM364 291h1v1h-1zM365 291h1v19h-1zM366 303h1v13h-1zM367 297h1v7h-1zM368 291h1v7h-1zM369 291h1v1h-1zM370 291h1v1h-1zM371 291h1v2h-1zM372 292h1v1h-1zM373 292h1v1h-1zM374 292h1v1h-1zM375 292h1v1h-1zM376 292h1v1h-1zM377 292h1v7h-1zM378 298h1v12h-1zM379 304h1v12h-1zM380 292h1v13h-1zM381 292h1v1h-1zM382 292h1v1h-1zM383 292h1v1h-1zM384 292h1v1h-1zM385 292h1v1h-1zM386 292h1v1h-1zM387 292h1v1h-1zM388 292h1v2h-1zM389 293h1v7h-1zM390 299h1v12h-1zM391 304h1v13h-1zM392 299h1v6h-1zM393 293h1v7h-1zM394 293h1v1h-1zM395 293h1v1h-1zM396 293h1v1h-1zM397 293h1v1h-1zM398 293h1v1h-1zM399 293h1v1h-1zM400 293h1v1h-1zM401 293h1v1h-1zM402 293h1v18h-1zM403 304h1v13h-1zM404 299h1v6h-1zM405 294h1v6h-1zM406 294h1v1h-1zM407 294h1v1h-1zM408 294h1v1h-1zM409 294h1v1h-1zM410 294h1v1h-1zM411 294h1v1h-1zM412 294h1v1h-1zM413 294h1v1h-1zM414 294h1v1h-1zM415 294h1v7h-1zM416 300h1v11h-1zM417 305h1v12h-1zM418 300h1v6h-1zM419 294h1v7h-1zM420 294h1v1h-1zM421 294h1v1h-1zM422 294h1v1h-1zM423 294h1v1h-1zM424 294h1v1h-1zM425 294h1v2h-1zM426 295h1v1h-1zM427 295h1v1h-1zM428 295h1v6h-1zM429 300h1v13h-1zM430 306h1v12h-1zM431 295h1v12h-1zM432 295h1v1h-1zM433 295h1v1h-1zM434 295h1v1h-1zM435 295h1v1h-1zM436 295h1v1h-1zM437 295h1v1h-1zM438 295h1v1h-1zM439 295h1v1h-1zM440 295h1v1h-1zM441 295h1v18h-1zM442 306h1v12h-1zM443 300h1v7h-1zM444 295h1v6h-1zM445 295h1v1h-1zM446 295h1v1h-1zM447 295h1v1h-1zM448 295h1v1h-1zM449 295h1v2h-1zM450 296h1v1h-1zM451 296h1v1h-1zM452 296h1v1h-1zM453 296h1v1h-1zM454 296h1v1h-1zM455 296h1v6h-1zM456 301h1v12h-1zM457 306h1v12h-1zM458 301h1v6h-1zM459 296h1v6h-1zM460 296h1v1h-1zM461 296h1v1h-1zM462 296h1v1h-1zM463 296h1v1h-1zM464 296h1v1h-1zM465 296h1v1h-1zM466 296h1v1h-1zM467 296h1v1h-1zM468 296h1v6h-1zM469 301h1v12h-1zM470 306h1v12h-1zM471 301h1v6h-1zM472 297h1v5h-1zM473 297h1v1h-1zM474 297h1v1h-1zM475 297h1v1h-1zM476 297h1v1h-1zM477 297h1v1h-1zM478 297h1v1h-1zM479 297h1v1h-1zM480 297h1v1h-1zM481 297h1v1h-1zM482 297h1v17h-1zM483 308h1v11h-1zM484 297h1v12h-1zM485 297h1v1h-1zM486 297h1v1h-1zM487 297h1v1h-1zM488 297h1v1h-1zM489 297h1v1h-1zM490 297h1v1h-1zM491 297h1v1h-1zM492 297h1v7h-1zM493 303h1v16h-1z" fill="#ffff00"/>
<polyline points="43.5,340.5 44.5,343.5 46.5,340.5 47.5,339.5 53.5,343.5 55.5,343.5 59.5,343.5 65.5,342.5 66.5,340.5 67.5,339.5 71.5,343.5 72.5,340.5 73.5,340.5 75.5,338.5 76.5,338.5 77.5,343.5 79.5,342.5 81.5,340.5 82.5,341.5 90.5,343.5 92.5,339.5 94.5,343.5 95.5,343.5 99.5,343.5 101.5,343.5 103.5,338.5 104.5,341.5 105.5,342.5 106.5,341.5 107.5,340.5 109.5,340.5 116.5,343.5 118.5,339.5 120.5,343.5 128.5,343.5 134.5,343.5 135.5,340.5 136.5,342.5 137.5,339.5 139.5,343.5 141.5,343.5 143.5,341.5 144.5,342.5 145.5,343.5 151.5,343.5 153.5,339.5 154.5,340.5 156.5,342.5 158.5,341.5 159.5,342.5 164.5,342.5 166.5,341.5 168.5,341.5 176.5,343.5 178.5,341.5 179.5,340.5 181.5,340.5 183.5,339.5 185.5,340.5 187.5,338.5 188.5,340.5 191.5,342.5 192.5,338.5 196.5,343.5 197.5,341.5 198.5,343.5 200.5,338.5 202.5,339.5 203.5,342.5 208.5,342.5 209.5,341.5 211.5,342.5 213.5,340.5 215.5,338.5 216.5,341.5 218.5,341.5 223.5,342.5 225.5,341.5 227.5,340.5 229.5,340.5 231.5,338.5 233.5,340.5 235.5,338.5 236.5,342.5 241.5,341.5 243.5,340.5 244.5,338.5 246.5,343.5 248.5,341.5 249.5,335.5 250.5,342.5 252.5,343.5 254.5,341.5 255.5,340.5 257.5,338.5 259.5,342.5 265.5,342.5 266.5,341.5 267.5,340.5 270.5,341.5 272.5,339.5 273.5,339.5 276.5,341.5 278.5,339.5 282.5,341.5 283.5,342.5 284.5,337.5 286.5,343.5 288.5,343.5 290.5,338.5 292.5,342.5 295.5,341.5 300.5,341.5 302.5,342.5 305.5,342.5 308.5,341.5 310.5,340.5 312.5,339.5 318.5,341.5 320.5,340.5 326.5,341.5 332.5,342.5 334.5,341.5 336.5,341.5 338.5,341.5 339.5,343.5 343.5,342.5 346.5,341.5 350.5,341.5 352.5,338.5 354.5,341.5 358.5,341.5 364.5,342.5 369.5,341.5 373.5,342.5 374.5,342.5 376.5,341.5 378.5,342.5 383.5,342.5 384.5,336.5 385.5,339.5 387.5,340.5 388.5,342.5 392.5,341.5 394.5,337.5 400.5,341.5 405.5,341.5 406.5,342.5 407.5,338.5 408.5,340.5 409.5,338.5 415.5,341.5 416.5,341.5 420.5,341.5 421.5,340.5 423.5,341.5 424.5,338.5 426.5,340.5 432.5,341.5 434.5,341.5 437.5,342.5 440.5,342.5 441.5,337.5 442.5,340.5 443.5,339.5 444.5,340.5 445.5,342.5 446.5,338.5 452.5,341.5 454.5,339.5 456.5,337.5 457.5,338.5 459.5,341.5 460.5,340.5 464.5,342.5 465.5,343.5 468.5,342.5 469.5,339.5 471.5,339.5 472.5,342.5 475.5,341.5 477.5,340.5 483.5,341.5 486.5,341.5 487.5,342.5 489.5,340.5 491.5,342.5 492.5,341.5 493.5,342.5" fill="none" stroke="#c8c888" stroke-width="1"/>
<rect x="494" y="88" width="1" height="258" fill="#ff0000"/>
</svg>
<span class="t" style="left:17.0px;top:307.5px;letter-spacing:0.013px;">2</span>
<span class="t" style="left:27.1px;top:307.5px;letter-spacing:0.684px;">X</span>
<span class="t" style="left:17.0px;top:280.5px;letter-spacing:0.013px;">4</span>
<span class="t" style="left:27.1px;top:280.5px;letter-spacing:0.684px;">X</span>
<span class="t" style="left:17.0px;top:253.5px;letter-spacing:0.013px;">6</span>
<span class="t" style="left:27.1px;top:253.5px;letter-spacing:0.684px;">X</span>
<span class="t" style="left:17.0px;top:226.5px;letter-spacing:0.013px;">8</span>
<span class="t" style="left:27.1px;top:226.5px;letter-spacing:0.684px;">X</span>
<span class="t" style="left:11.1px;top:199.5px;letter-spacing:-0.380px;">10</span>
<span class="t" style="left:27.1px;top:199.5px;letter-spacing:0.684px;">X</span>
<span class="t" style="left:11.1px;top:172.5px;letter-spacing:-0.380px;">12</span>
<span class="t" style="left:27.1px;top:172.5px;letter-spacing:0.684px;">X</span>
<span class="t" style="left:11.1px;top:145.5px;letter-spacing:-0.380px;">14</span>
<span class="t" style="left:27.1px;top:145.5px;letter-spacing:0.684px;">X</span>
<span class="t" style="left:11.1px;top:118.5px;letter-spacing:-0.380px;">16</span>
<span class="t" style="left:27.1px;top:118.5px;letter-spacing:0.684px;">X</span>
<span class="t" style="left:11.1px;top:91.5px;letter-spacing:-0.380px;">18</span>
<span class="t" style="left:27.1px;top:91.5px;letter-spacing:0.684px;">X</span>
<span class="t" style="left:36.4px;top:348.5px;letter-spacing:-1.029px;">0.0</span>
<span class="t" style="left:88.4px;top:348.5px;letter-spacing:-1.029px;">0.5</span>
<span class="t" style="left:140.4px;top:348.5px;letter-spacing:-1.029px;">1.0</span>
<span class="t" style="left:192.4px;top:348.5px;letter-spacing:-1.029px;">1.5</span>
<span class="t" style="left:244.4px;top:348.5px;letter-spacing:-1.029px;">2.0</span>
<span class="t" style="left:296.4px;top:348.5px;letter-spacing:-1.029px;">2.5</span>
<span class="t" style="left:348.4px;top:348.5px;letter-spacing:-1.029px;">3.0</span>
<span class="t" style="left:400.4px;top:348.5px;letter-spacing:-1.029px;">3.5</span>
<span class="t" style="left:452.4px;top:348.5px;letter-spacing:-1.029px;">4.0</span>
<span class="t" style="left:504.4px;top:348.5px;letter-spacing:-1.029px;">4.5</span>
<span class="t" style="left:513.3px;top:293.5px;letter-spacing:-0.487px;">4</span>
<span class="t" style="left:513.3px;top:252.5px;letter-spacing:-0.487px;">8</span>
<span class="t" style="left:513.3px;top:212.5px;letter-spacing:-0.580px;">12</span>
<span class="t" style="left:513.3px;top:171.5px;letter-spacing:-0.580px;">16</span>
<span class="t" style="left:513.3px;top:131.5px;letter-spacing:-0.580px;">20</span>
<span class="t" style="left:513.3px;top:90.5px;letter-spacing:-0.580px;">24</span>
<span class="t" style="left:165.4px;top:13.5px;letter-spacing:0.208px;">[1:0]</span>
<span class="t" style="left:198.2px;top:13.5px;letter-spacing:-1.747px;">ASUS</span>
<span class="t" style="left:227.5px;top:13.5px;letter-spacing:-1.004px;">DRW-1814BLT</span>
<span class="t" style="left:300.3px;top:13.5px;letter-spacing:-0.590px;">1.10</span>
<span class="t" style="left:591.2px;top:13.5px;letter-spacing:-0.029px;color:#808080;text-shadow:1px 1px 0 #d8d8d8;">Start</span>
<span class="t" style="left:675.5px;top:13.5px;letter-spacing:-0.479px;">Exit</span>
<span class="t" style="left:7.4px;top:51.5px;letter-spacing:-0.545px;">Benchmark</span>
<span class="t" style="left:150.0px;top:51.5px;letter-spacing:-0.961px;">Disc</span>
<span class="t" style="left:174.0px;top:51.5px;letter-spacing:0.096px;">Info</span>
<span class="t" style="left:207.2px;top:51.5px;letter-spacing:-0.761px;">Disc</span>
<span class="t" style="left:232.9px;top:51.5px;letter-spacing:-0.066px;">Quality</span>
<span class="t" style="left:281.8px;top:51.5px;letter-spacing:-0.348px;">ScanDisc</span>
<span class="t" style="left:75.2px;top:49.5px;letter-spacing:-0.455px;">Create</span>
<span class="t" style="left:113.2px;top:49.5px;letter-spacing:0.039px;">Disc</span>
<span class="t" style="left:546.8px;top:72.5px;letter-spacing:-0.411px;">Disc</span>
<span class="t" style="left:572.6px;top:72.5px;letter-spacing:-0.165px;">info</span>
<span class="t" style="left:547.4px;top:84.5px;letter-spacing:-0.712px;">Type:</span>
<span class="t" style="left:607.5px;top:84.5px;letter-spacing:0.040px;color:#000080;">DVD-R</span>
<span class="t" style="left:547.4px;top:99.5px;letter-spacing:-1.081px;">ID:</span>
<span class="t" style="left:607.5px;top:99.5px;letter-spacing:-0.115px;color:#000080;">MBI</span>
<span class="t" style="left:630.7px;top:99.5px;letter-spacing:-0.801px;color:#000080;">03RG40</span>
<span class="t" style="left:547.4px;top:114.0px;letter-spacing:-0.635px;">Length:</span>
<span class="t" style="left:606.8px;top:114.0px;letter-spacing:-0.765px;color:#000080;">4.38</span>
<span class="t" style="left:630.7px;top:114.0px;letter-spacing:-0.772px;color:#000080;">GB</span>
<span class="t" style="left:545.9px;top:130.5px;letter-spacing:-0.220px;">Settings</span>
<span class="t" style="left:545.9px;top:144.5px;letter-spacing:-0.661px;">Speed</span>
<span class="t" style="left:647.0px;top:147.5px;letter-spacing:-0.840px;">16.0</span>
<span class="t" style="left:671.5px;top:147.5px;letter-spacing:0.184px;">X</span>
<span class="t" style="left:564.9px;top:164.5px;letter-spacing:-1.015px;">Burn</span>
<span class="t" style="left:591.6px;top:164.5px;letter-spacing:-0.398px;">image</span>
<span class="t" style="left:564.4px;top:180.5px;letter-spacing:-0.311px;">Simulate</span>
<span class="t" style="left:545.9px;top:201.5px;letter-spacing:-0.661px;">Speed</span>
<span class="t" style="left:559.8px;top:212.5px;letter-spacing:-0.469px;">Average</span>
<span class="t" style="left:664.0px;top:212.5px;letter-spacing:-0.492px;">Type:</span>
<span class="t" style="left:566.2px;top:242.5px;letter-spacing:-0.165px;">Start:</span>
<span class="t" style="left:667.8px;top:242.5px;letter-spacing:-1.147px;">End:</span>
<span class="t" style="left:564.4px;top:226.5px;letter-spacing:0.154px;color:#00ffff;font-weight:bold;">7.18x</span>
<span class="t" style="left:656.9px;top:226.5px;letter-spacing:1.953px;color:#00ffff;font-weight:bold;">Z-CLV</span>
<span class="t" style="left:564.4px;top:256.5px;letter-spacing:0.154px;color:#00ffff;font-weight:bold;">6.66x</span>
<span class="t" style="left:661.5px;top:256.5px;letter-spacing:0.194px;color:#00ffff;font-weight:bold;">4.50x</span>
<span class="t" style="left:546.6px;top:277.5px;letter-spacing:-0.185px;">Buffer</span>
<span class="t" style="left:683.1px;top:288.5px;letter-spacing:-1.510px;color:#000080;">99%</span>
<span class="t" style="left:548.4px;top:300.5px;letter-spacing:-0.730px;color:#000080;">99</span>
<span class="t" style="left:564.9px;top:300.5px;letter-spacing:3.400px;color:#000080;">-</span>
<span class="t" style="left:575.1px;top:300.5px;letter-spacing:-1.576px;color:#000080;">100%</span>
<span class="t" style="left:603.0px;top:300.5px;letter-spacing:-1.354px;color:#000080;">(99%</span>
<span class="t" style="left:628.4px;top:300.5px;letter-spacing:-0.186px;color:#000080;">avg)</span>
<span class="t" style="left:594.1px;top:316.5px;letter-spacing:-1.533px;">Show</span>
<span class="t" style="left:623.4px;top:316.5px;letter-spacing:-0.101px;">graph</span>
<span class="t" style="left:545.9px;top:336.5px;letter-spacing:-1.115px;">CPU</span>
<span class="t" style="left:573.3px;top:336.5px;letter-spacing:-0.797px;">Usage</span>
<span class="t" style="left:683.8px;top:347.5px;letter-spacing:-2.572px;color:#000080;">0%</span>
<span class="t" style="left:548.4px;top:359.5px;letter-spacing:-0.587px;color:#000080;">0</span>
<span class="t" style="left:558.5px;top:359.5px;letter-spacing:3.000px;color:#000080;">-</span>
<span class="t" style="left:568.0px;top:359.5px;letter-spacing:-2.072px;color:#000080;">8%</span>
<span class="t" style="left:585.2px;top:359.5px;letter-spacing:-2.115px;color:#000080;">(1%</span>
<span class="t" style="left:603.5px;top:359.5px;letter-spacing:0.014px;color:#000080;">avg)</span>
<span class="t" style="left:594.1px;top:375.5px;letter-spacing:-1.533px;">Show</span>
<span class="t" style="left:623.4px;top:375.5px;letter-spacing:-0.101px;">graph</span>
<span class="t" style="left:546.6px;top:394.5px;letter-spacing:-0.566px;">Progress</span>
<span class="t" style="left:547.1px;top:407.5px;letter-spacing:-0.337px;">Position:</span>
<span class="t" style="left:618.3px;top:407.5px;letter-spacing:-0.701px;color:#000080;">4482</span>
<span class="t" style="left:647.5px;top:407.5px;letter-spacing:-0.850px;color:#000080;">MB</span>
<span class="t" style="left:547.1px;top:422.5px;letter-spacing:-0.625px;">Elapsed:</span>
<span class="t" style="left:618.3px;top:422.5px;letter-spacing:-0.840px;color:#000080;">9:09</span>
<span class="t" style="left:23.4px;top:383.5px;letter-spacing:-0.539px;">[14:54:14]</span>
<span class="t" style="left:81.4px;top:383.5px;letter-spacing:-0.411px;">Elapsed</span>
<span class="t" style="left:125.1px;top:383.5px;letter-spacing:-0.812px;">Time:</span>
<span class="t" style="left:159.5px;top:383.5px;letter-spacing:-0.740px;">5:59</span>
<span class="t" style="left:23.4px;top:396.5px;letter-spacing:-0.539px;">[15:34:28]</span>
<span class="t" style="left:80.5px;top:396.5px;letter-spacing:-0.495px;">Creating</span>
<span class="t" style="left:127.5px;top:396.5px;letter-spacing:-0.690px;">Data</span>
<span class="t" style="left:156.0px;top:396.5px;letter-spacing:-0.261px;">Disc</span>
<span class="t" style="left:23.4px;top:409.5px;letter-spacing:-0.539px;">[15:43:38]</span>
<span class="t" style="left:80.5px;top:409.5px;letter-spacing:-0.421px;">Speed:7-5</span>
<span class="t" style="left:135.3px;top:409.5px;letter-spacing:-0.116px;">X</span>
<span class="t" style="left:146.3px;top:409.5px;letter-spacing:0.364px;">Z-CLV</span>
<span class="t" style="left:186.4px;top:409.5px;letter-spacing:-0.572px;">(7.18</span>
<span class="t" style="left:214.8px;top:409.5px;letter-spacing:0.484px;">X</span>
<span class="t" style="left:226.5px;top:409.5px;letter-spacing:-0.734px;">average)</span>
<span class="t" style="left:23.4px;top:422.5px;letter-spacing:-0.539px;">[15:43:38]</span>
<span class="t" style="left:81.4px;top:422.5px;letter-spacing:-0.411px;">Elapsed</span>
<span class="t" style="left:125.1px;top:422.5px;letter-spacing:-0.812px;">Time:</span>
<span class="t" style="left:159.5px;top:422.5px;letter-spacing:-0.740px;">9:09</span>
</body></html>
